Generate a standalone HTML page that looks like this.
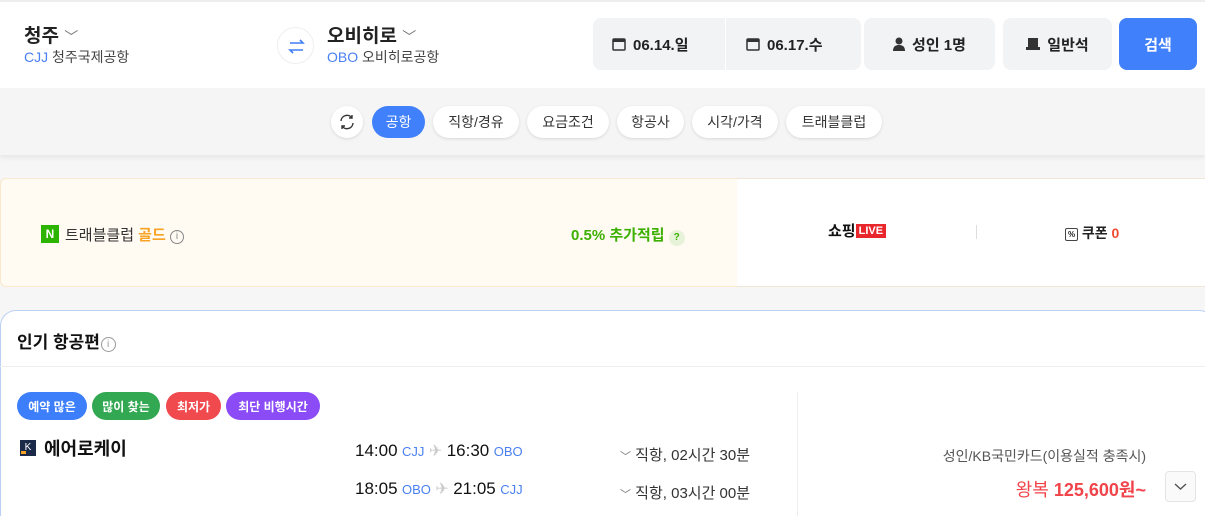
<!DOCTYPE html>
<html><head><meta charset="utf-8"><style>
*{box-sizing:border-box;margin:0;padding:0}
html,body{width:1205px;height:516px;overflow:hidden}
body{background:#f6f6f6;font-family:"Liberation Sans","Noto Sans CJK KR",sans-serif;color:#222;position:relative}
.a{position:absolute}
.hdr{left:0;top:0;width:1205px;height:88px;background:#fff;border-top:2px solid #eee}
.box{background:#f2f3f5;border-radius:8px;height:52px;top:18px;display:flex;align-items:center;justify-content:center;font-size:15px;font-weight:bold;color:#222;gap:7px}
.chip{top:106px;height:32px;border-radius:16px;background:#fff;box-shadow:0 1px 3px rgba(0,0,0,.12);font-size:14px;color:#333;display:flex;align-items:center;justify-content:center}
.badge{top:392px;height:28px;border-radius:14px;color:#fff;font-size:12px;font-weight:bold;display:flex;align-items:center;justify-content:center}
.t{font-size:17px;color:#111}
.c{font-size:13px;color:#4a80f0}
</style></head><body>
<div class="a hdr"></div>
<div class="a" style="left:24px;top:21px;font-size:19px;font-weight:bold">청주 <span style="font-weight:normal;color:#777;font-size:14px">﹀</span></div>
<div class="a" style="left:24px;top:47px;font-size:14px;color:#444"><span style="color:#4a80f0">CJJ</span> 청주국제공항</div>
<div class="a" style="left:277px;top:27px;width:37px;height:37px;border-radius:50%;border:1px solid #eee;background:#fff"><svg width="37" height="37" viewBox="0 0 37 37"><path d="M12 15h13l-3-3M25 22H12l3 3" fill="none" stroke="#3f7ef7" stroke-width="1.6"/></svg></div>
<div class="a" style="left:327px;top:21px;font-size:19px;font-weight:bold">오비히로 <span style="font-weight:normal;color:#777;font-size:14px">﹀</span></div>
<div class="a" style="left:327px;top:47px;font-size:14px;color:#444"><span style="color:#4a80f0">OBO</span> 오비히로공항</div>
<div class="a" style="left:593px;top:18px;width:268px;height:52px;background:#f2f3f5;border-radius:8px"></div>
<div class="a" style="left:725px;top:18px;width:1px;height:52px;background:#fff"></div>
<div class="a box" style="left:612px;width:113px;background:none;justify-content:flex-start"><svg width="14" height="14"><rect x="1" y="2" width="12" height="11" rx="1" fill="none" stroke="#333" stroke-width="1.5"/><rect x="1" y="2" width="12" height="3" fill="#333"/></svg>06.14.일</div>
<div class="a box" style="left:746px;width:115px;background:none;justify-content:flex-start"><svg width="14" height="14"><rect x="1" y="2" width="12" height="11" rx="1" fill="none" stroke="#333" stroke-width="1.5"/><rect x="1" y="2" width="12" height="3" fill="#333"/></svg>06.17.수</div>
<div class="a box" style="left:864px;width:131px"><svg width="12" height="14"><circle cx="6" cy="4" r="3.5" fill="#333"/><path d="M0 14c0-5 3-6 6-6s6 1 6 6z" fill="#333"/></svg>성인 1명</div>
<div class="a box" style="left:1003px;width:109px"><svg width="14" height="12"><rect x="2" y="0" width="10" height="9" fill="#333"/><rect x="0" y="9" width="14" height="3" fill="#333"/></svg>일반석</div>
<div class="a box" style="left:1119px;width:78px;background:#4080fa;color:#fff">검색</div>
<div class="a" style="left:0;top:88px;width:1205px;height:67px;background:#f5f5f5;box-shadow:0 3px 4px rgba(0,0,0,.06)"></div>
<div class="a chip" style="left:331px;width:32px"><svg width="18" height="18" viewBox="0 0 18 18" fill="none" stroke="#333" stroke-width="1.4"><path d="M3 8a6 6 0 0 1 11-3M15 10a6 6 0 0 1-11 3M14 2v3h-3M4 16v-3h3"/></svg></div>
<div class="a chip" style="left:372px;width:53px;background:#4080fa;color:#fff;box-shadow:none">공항</div>
<div class="a chip" style="left:433px;width:86px">직항/경유</div>
<div class="a chip" style="left:527px;width:82px">요금조건</div>
<div class="a chip" style="left:617px;width:67px">항공사</div>
<div class="a chip" style="left:692px;width:86px">시각/가격</div>
<div class="a chip" style="left:786px;width:96px">트래블클럽</div>
<div class="a" style="left:0;top:178px;width:1210px;height:109px;background:#fff;border:1px solid #f0e6d6;border-radius:6px"></div>
<div class="a" style="left:0;top:178px;width:737px;height:109px;background:#fffaf2;border:1px solid #fae8cf;border-right:none;border-radius:6px 0 0 6px"></div>
<div class="a" style="left:41px;top:225px;width:18px;height:18px;background:#2db400;color:#fff;font-size:12px;font-weight:bold;text-align:center;line-height:18px">N</div>
<div class="a" style="left:65px;top:224px;font-size:15px;color:#333">트래블클럽 <span style="color:#f7a325;font-weight:bold">골드</span> <span style="display:inline-block;width:14px;height:14px;border:1px solid #888;border-radius:50%;font-size:10px;text-align:center;line-height:12px;color:#888;vertical-align:1px">i</span></div>
<div class="a" style="left:571px;top:224px;font-size:15px;color:#3cb000;font-weight:bold">0.5% 추가적립 <span style="display:inline-block;width:16px;height:16px;border-radius:50%;background:#e6f3d9;font-size:10px;text-align:center;line-height:16px;color:#3cb000">?</span></div>
<div class="a" style="left:828px;top:220px;font-size:15px;font-weight:bold;color:#111">쇼핑<span style="display:inline-block;background:#e8262c;color:#fff;font-size:11px;padding:1px 3px;vertical-align:2px">LIVE</span></div>
<div class="a" style="left:976px;top:225px;width:1px;height:14px;background:#ddd"></div>
<div class="a" style="left:1065px;top:223px;font-size:14px;font-weight:bold;color:#222"><span style="display:inline-block;width:13px;height:13px;border:1px solid #444;border-radius:2px;font-size:8px;text-align:center;line-height:11px;vertical-align:1px">%</span> 쿠폰 <span style="color:#f04a2f">0</span></div>
<div class="a" style="left:0;top:310px;width:1215px;height:206px;background:#fff;border:1px solid #bcd0f5;border-bottom:none;border-radius:16px 16px 0 0"></div>
<div class="a" style="left:17px;top:328px;font-size:17px;font-weight:bold;color:#111">인기 항공편 <span style="display:inline-block;width:15px;height:15px;border:1px solid #999;border-radius:50%;font-size:10px;text-align:center;line-height:13px;color:#999;font-weight:normal;vertical-align:1px;margin-left:-4px">i</span></div>
<div class="a" style="left:0;top:366px;width:1205px;height:1px;background:#eee"></div>
<div class="a badge" style="left:17px;width:70px;background:#3d7ffb">예약 많은</div>
<div class="a badge" style="left:92px;width:68px;background:#32a852">많이 찾는</div>
<div class="a badge" style="left:166px;width:55px;background:#f04a4f">최저가</div>
<div class="a badge" style="left:226px;width:94px;background:#8b4cf7">최단 비행시간</div>
<div class="a" style="left:20px;top:440px;width:16px;height:16px;background:#1c2a4a;color:#fff;font-size:10px;text-align:center;line-height:16px"><span style="position:absolute;left:1px;bottom:2px;width:5px;height:3px;background:#f7a325"></span>K</div>
<div class="a" style="left:44px;top:435px;font-size:18px;font-weight:bold;color:#111">에어로케이</div>
<div class="a" style="left:355px;top:441px"><span class="t">14:00</span> <span class="c">CJJ</span> <span style="color:#ccc">✈</span> <span class="t">16:30</span> <span class="c">OBO</span></div>
<div class="a" style="left:355px;top:479px"><span class="t">18:05</span> <span class="c">OBO</span> <span style="color:#ccc">✈</span> <span class="t">21:05</span> <span class="c">CJJ</span></div>
<div class="a" style="left:620px;top:444px;font-size:15px;color:#333"><span style="color:#777;font-size:11px">﹀</span> 직항, 02시간 30분</div>
<div class="a" style="left:620px;top:482px;font-size:15px;color:#333"><span style="color:#777;font-size:11px">﹀</span> 직항, 03시간 00분</div>
<div class="a" style="left:797px;top:392px;width:1px;height:124px;background:#eee"></div>
<div class="a" style="right:59px;top:446px;font-size:14px;color:#555">성인/KB국민카드(이용실적 충족시)</div>
<div class="a" style="right:59px;top:476px;font-size:18px;color:#f0444a">왕복 <b>125,600원~</b></div>
<div class="a" style="left:1165px;top:471px;width:31px;height:31px;border:1px solid #e4e4e4;border-radius:4px;background:#fafafa"><svg width="29" height="29"><path d="M9 12l5.5 5 5.5-5" fill="none" stroke="#555" stroke-width="1.4"/></svg></div>
</body></html>
